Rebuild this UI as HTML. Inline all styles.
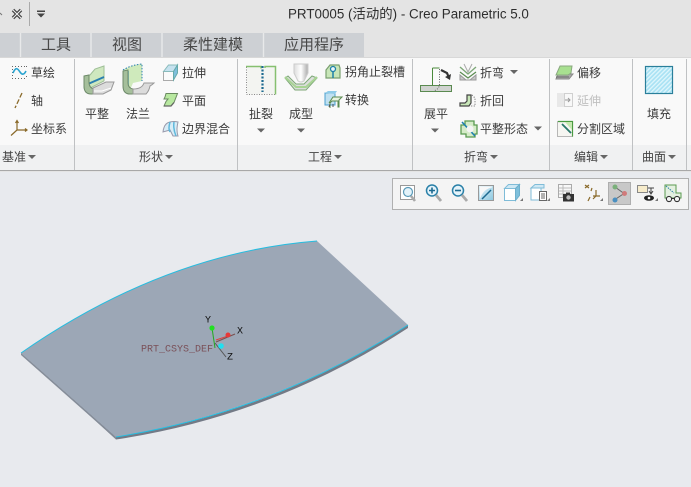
<!DOCTYPE html>
<html lang="zh"><head><meta charset="utf-8"><title>Creo</title>
<style>
html,body{margin:0;padding:0;background:#e8eaee;overflow:hidden}
svg{display:block;position:absolute;left:0;top:0}
text{font-family:"Liberation Sans","Noto Sans CJK SC",sans-serif;font-size:12px;fill:#3a3a3a;dominant-baseline:central}
.t{font-size:15px;fill:#484848;text-anchor:middle}
.g{fill:#444}
.c{font-family:"Liberation Mono",monospace;font-size:9px;fill:#111}
</style></head><body>
<svg width="691" height="487" viewBox="0 0 691 487">
<defs>
<pattern id="h" width="3" height="3" patternUnits="userSpaceOnUse" patternTransform="rotate(45)"><rect width="3" height="3" fill="#a9e2f4"/><rect width="1.3" height="3" fill="#e0f6fc"/></pattern>
<linearGradient id="nz" x1="0" x2="1"><stop offset="0" stop-color="#ddd"/><stop offset=".5" stop-color="#fff"/><stop offset="1" stop-color="#aaa"/></linearGradient>
<linearGradient id="bl" x1="0" y1="0" x2="1" y2="1"><stop offset="0" stop-color="#e4f3fa"/><stop offset="1" stop-color="#8cc8e0"/></linearGradient>
</defs>
<!-- chrome -->
<rect width="691" height="172" fill="#e4e4e4"/>
<rect x="0" y="33" width="364" height="25" fill="#cdd0d4"/>
<g stroke="#e8e9ea" stroke-width="1.4"><path d="M20.5 33v25M91 33v25M162 33v25M263.500 33v25"/></g>
<rect x="0" y="58" width="691" height="87" fill="#f9f9f9"/>
<rect x="0" y="145" width="691" height="25" fill="#f0f1f2"/>
<rect x="0" y="57" width="691" height="1" fill="#d8d8d8"/>
<rect x="0" y="170" width="691" height="1" fill="#a8a8a8"/>
<path d="M74.500 59v111M237.500 59v111M412.500 59v111M549.500 59v111M632.500 59v111M686.500 59v111" stroke="#bfc1c3" fill="none"/>
<!-- quick access -->
<path d="M0 13l2 2" stroke="#777" fill="none"/>
<path d="M13 10l8 8M21 10l-8 8" stroke="#444" stroke-width="3.400" fill="none"/><path d="M13 10l8 8M21 10l-8 8" stroke="#f2f2f2" stroke-width="1" fill="none"/>
<rect x="29" y="2" width="1" height="24" fill="#aaa"/>
<rect x="37" y="10.500" width="8" height="1.500" fill="#444"/><path d="M37 13.500h8l-4 4z" fill="#444"/>
<text x="288" y="14" style="font-size:13.400px;fill:#2e2e2e">PRT0005 (活动的) - Creo Parametric 5.0</text>
<!-- tabs -->
<text class="t" x="56" y="45">工具</text><text class="t" x="127" y="45">视图</text><text class="t" x="213" y="45">柔性建模</text><text class="t" x="314" y="45">应用程序</text>
<!-- labels -->
<text x="31" y="73">草绘</text><text x="31" y="101">轴</text><text x="31" y="129">坐标系</text>
<text x="85" y="114">平整</text><text x="126" y="114">法兰</text>
<text x="182" y="73">拉伸</text><text x="182" y="101">平面</text><text x="182" y="129">边界混合</text>
<text x="249" y="114">扯裂</text><text x="289" y="114">成型</text>
<text x="345" y="72">拐角止裂槽</text><text x="345" y="100">转换</text>
<text x="424" y="114">展平</text><text x="480" y="73">折弯</text><text x="480" y="101">折回</text><text x="480" y="129">平整形态</text>
<text x="577" y="73">偏移</text><text x="577" y="101" style="fill:#c0c0c0">延伸</text><text x="577" y="129">分割区域</text>
<text x="647" y="114">填充</text>
<text class="g" x="2" y="157">基准</text><text class="g" x="139" y="157">形状</text><text class="g" x="308" y="157">工程</text><text class="g" x="464" y="157">折弯</text><text class="g" x="574" y="157">编辑</text><text class="g" x="642" y="157">曲面</text>
<!-- arrows -->
<g fill="#666">
<path d="M28 155h8l-4 4zM165 155h8l-4 4zM334 155h8l-4 4zM490 155h8l-4 4zM600 155h8l-4 4zM668 155h8l-4 4z"/>
<path d="M257 128.500h8l-4 4zM297 128.500h8l-4 4zM431 128.500h8l-4 4zM510 70h8l-4 4zM534 126.500h8l-4 4z"/>
</g>
<!-- 草绘 -->
<path d="M12 66.500h15M12 72.500h2M12 78.500h15M12.500 66v13M26.500 66v2M26.500 76v3" stroke="#666" stroke-dasharray="1 2" fill="none"/>
<path d="M13 73c3-7 5-4 7-1 2 3 4 3 6-1" stroke="#2ba4d0" stroke-width="1.600" fill="none"/>
<!-- 轴 -->
<path d="M22 93l-7 15" stroke="#8a6a2a" stroke-width="1.300" stroke-dasharray="5 2" fill="none"/>
<!-- 坐标系 -->
<path d="M17 121v9h10M17 130l-6 5.500M15.500 123l1.500-2.500 1.500 2.500M25 128.500l2 1.500-2 1.500" stroke="#8a6a2a" stroke-width="1.200" fill="none"/>
<!-- 平整 -->
<path d="M84 76l6-1 5-6 9-3v15l-12 6-3 3-5-2z" fill="#cfe8bf" stroke="#9fbf98"/>
<path d="M88 84l16-7" stroke="#2a7fb0" stroke-width="2" fill="none"/>
<path d="M84 76v10q0 8 7 8h3v-5q-5-1-5-7v-7z" fill="#a5bf9b" stroke="#6e8a6a"/>
<path d="M93 88l13-6h8l-3 8-8 4H93z" fill="#dcdcdc" stroke="#999"/>
<path d="M94 91h8l9-3" stroke="#fff" fill="none"/>
<!-- 法兰 -->
<path d="M123 70q8-5 19-6v17l-9 2-3 7-7-2z" fill="#cfeabc"/>
<path d="M123 70q8-5 19-6v17" stroke="#2a7fb0" stroke-dasharray="1.500 1.500" fill="none"/>
<path d="M127.500 71v15" stroke="#1689c8" stroke-width="2.400" fill="none"/>
<path d="M123 71v15q0 8 7 8h3v-5q-5-1-5-6V70z" fill="#a5bf9b" stroke="#6e8a6a"/>
<path d="M133 89q9 0 11-6h10q-2 2-4 3-1 5-4 8h-13z" fill="#dcdcdc" stroke="#999"/>
<!-- 拉伸 -->
<path d="M163.500 71.500h10v9h-10z" fill="#fafafa" stroke="#aaa"/>
<path d="M163.500 71.500l5-6.500h9l-4 6.500z" fill="#c6e2ef" stroke="#8bb"/>
<path d="M173.500 71.500l4-6.500v8l-4 7z" fill="#7fbfdc" stroke="#6aa"/>
<!-- 平面 -->
<path d="M166 93.500h11.500l-3.500 9-3 3.500h-7l2-4.500 2-2.500h-4l1-2z" fill="#b8e8a0" stroke="#6a8a60"/>
<path d="M164 106h7l3-3.500" stroke="#666" stroke-width="1.300" fill="none"/>
<!-- 边界混合 -->
<path d="M163 132q1-9 7-10 4-1 8 0-2 8 0 14l-5 0-3-6z" fill="#d8ecf6" stroke="#99a"/>
<path d="M170 122q-2 7 0 10M174 122q-1 7 2 14" stroke="#5fb8dc" stroke-width="1.500" fill="none"/>
<!-- 扯裂 -->
<rect x="247" y="67" width="29" height="27.500" fill="#f3f4f1"/>
<path d="M246.500 67v27.500h29" stroke="#888" stroke-dasharray="1 1.500" fill="none"/>
<path d="M246 66.500h15v2M265 68v-1.500h10.500v28" stroke="#86c070" stroke-width="1.500" fill="none"/>
<path d="M262.500 66v26" stroke="#1d6a90" stroke-width="2.200" stroke-dasharray="2 1.500" fill="none"/>
<!-- 成型 -->
<path d="M294 64h14v9l-4 8q-3 2-6 0l-4-8z" fill="url(#nz)" stroke="#ccc"/>
<path d="M285 78l3-2 8 8h8l8-8 5 2-11 12h-11z" fill="#dcdedc" stroke="#7ea878"/>
<path d="M285 77l11 10h10l11-10" stroke="#a8d494" stroke-width="2" fill="none"/>
<!-- 拐角止裂槽 -->
<path d="M326 78v-8l4-5h9l1 3v10z" fill="#c8e6b8" stroke="#7aa070" stroke-width="1.200"/>
<circle cx="333" cy="69" r="2.500" fill="#eaf6fb" stroke="#1e80a8" stroke-width="1.300"/><path d="M333 71v7" stroke="#1e80a8" stroke-width="1.500"/>
<!-- 转换 -->
<path d="M325 93h10v12h-10z" fill="#c0e0f0" stroke="#4aa0d0"/><path d="M325 93l3-2h9l-2 3z" fill="#8fcbe8"/>
<path d="M329 103l4-6h9l-3 3v7h-1v-6h-6l-2 2v5" fill="#e8f3e0" stroke="#5a8a50"/><path d="M330 104l-1 3M333 104v3" stroke="#555" fill="none"/>
<!-- 展平 -->
<rect x="420.500" y="85.500" width="31" height="6" fill="#d0d3d0" stroke="#5a8a50"/>
<path d="M432.500 68v17.500M432.500 68h7" stroke="#4a8a3c" fill="none"/>
<rect x="433" y="69" width="6" height="16" fill="#fafafa"/>
<path d="M439.500 69v15q0 5-6 7" stroke="#666" stroke-dasharray="1 1.500" fill="none"/>
<path d="M441 70l6 3 2 5" stroke="#333" stroke-width="2.200" fill="none"/><path d="M451 74l-1 6-5-3z" fill="#333"/>
<!-- 折弯 -->
<path d="M460 67l8 7 8-7" stroke="#7ea878" stroke-width="1.400" fill="none"/>
<path d="M464 64l4 8 4-8" stroke="#aaa" fill="none"/>
<path d="M460 72l8 6 8-6" stroke="#5a8a50" stroke-width="1.200" fill="none"/>
<path d="M460 75l6 5h4l6-5v5h-16z" fill="#c8c8c8" stroke="#999"/>
<!-- 折回 -->
<path d="M460 106v-3h5l2-2v-6h4v8l-2 3z" fill="#c8e6b8" stroke="#444" stroke-width="1.200"/>
<path d="M472 95l3 3v8h-4" stroke="#666" stroke-dasharray="1 1.500" fill="none"/>
<!-- 平整形态 -->
<path d="M461 125h4v-4h9v4h3v9h-2v3h-9v-3h-5z" fill="#d5ecc8" stroke="#5a9a50" stroke-width="1.300"/>
<path d="M462 122l13 14" stroke="#1e80b0" stroke-width="1.600" fill="none"/><circle cx="470" cy="129" r="3.500" fill="#f4f4f4"/>
<!-- 偏移 -->
<path d="M558 74l-2 5h13l4-5z" fill="#aaa" stroke="#888"/>
<path d="M560 66h12l-1 7-3 2h-12z" fill="#a8e090" stroke="#8aa880"/>
<path d="M556 77h13" stroke="#666" fill="none"/>
<!-- 延伸 -->
<rect x="557" y="93" width="7" height="14" fill="#e8e8e8"/><rect x="564.500" y="93.500" width="8" height="13" fill="#f8f8f8" stroke="#d0d0d0"/>
<path d="M565 100h5M568 98l2 2-2 2" stroke="#999" fill="none"/>
<!-- 分割区域 -->
<rect x="557.500" y="121.500" width="15" height="15" fill="#f6f6f2" stroke="#777" stroke-dasharray="1 1"/>
<path d="M558 121.500h14.500v15" stroke="#4a9a40" stroke-width="1.200" fill="none"/>
<path d="M565 122h7v8z" fill="#c5e8b0"/><path d="M562 124l9 9" stroke="#28786a" stroke-width="1.800" fill="none"/>
<!-- 填充 -->
<rect x="645.500" y="66.500" width="27" height="27" fill="url(#h)" stroke="#2a7f9a" stroke-width="1.200"/>
<!-- view toolbar -->
<rect x="392.500" y="178.500" width="296" height="31" fill="#f4f4f4" stroke="#b0b0b0"/>
<rect x="608.500" y="182.500" width="22" height="22" fill="#c8c8c8" stroke="#aeaeae"/>
<!-- refit -->
<rect x="400.500" y="185.500" width="14" height="14" fill="#fff" stroke="#999"/>
<circle cx="408" cy="192" r="4.500" fill="#e4f3fa" stroke="#5a9ab8" stroke-width="1.200"/><path d="M411 196l4 5" stroke="#aaa" stroke-width="2.600"/>
<!-- zoom in -->
<circle cx="432" cy="190.500" r="5.500" fill="#e4f3fa" stroke="#2a80a8" stroke-width="1.500"/><path d="M429 190.500h6M432 187.500v6" stroke="#1d6a90" stroke-width="1.600"/><path d="M436 195l5 6" stroke="#aaa" stroke-width="2.800"/>
<!-- zoom out -->
<circle cx="458" cy="190.500" r="5.500" fill="#e4f3fa" stroke="#2a80a8" stroke-width="1.500"/><path d="M455 190.500h6" stroke="#1d6a90" stroke-width="1.600"/><path d="M462 195l5 6" stroke="#aaa" stroke-width="2.800"/>
<!-- repaint -->
<rect x="478.500" y="185.500" width="15" height="15" fill="url(#bl)" stroke="#999"/>
<path d="M480 186.500h12v1q-8 1-12 11z" fill="#f8f8f8"/><path d="M482 199l9-9" stroke="#1d6a90" stroke-width="1.500"/>
<!-- named view -->
<path d="M504.500 188.500h11v12h-11z" fill="#fff" stroke="#7fbcd8"/><path d="M504.500 188.500l4-4h11l-4 4z" fill="#cfe8f4" stroke="#7fbcd8"/><path d="M515.500 188.500l4-4v11l-4 5z" fill="#7fc0dc" stroke="#6fb0cc"/>
<path d="M520 201h3v-3z" fill="#777"/>
<!-- saved orient -->
<path d="M531 188h10v12h-10z" fill="#fff" stroke="#7fbcd8"/><path d="M531 188l4-3.500h9v3.500z" fill="#cfe8f4" stroke="#7fbcd8"/>
<rect x="539.500" y="191.500" width="7" height="9" fill="#fff" stroke="#666"/><path d="M541 194h4M541 196h4M541 198h4" stroke="#666"/>
<path d="M547 201h3v-3z" fill="#777"/>
<!-- camera/table -->
<rect x="558.500" y="184.500" width="13" height="13" fill="#f8f8f8" stroke="#aaa"/><path d="M559 188h12M559 191h12M559 194h12M563 185v12" stroke="#bbb"/>
<rect x="563" y="194" width="11" height="7.500" fill="#333"/><rect x="566" y="192.500" width="4" height="2" fill="#333"/><circle cx="568.500" cy="197.500" r="2.200" fill="#bbb"/>
<!-- datum planes -->
<path d="M585 185l4 3M589 185l-4 3M592 188l-1 3M590 197l-2 4M596 190v6M593 196h7M596 196l-3 3" stroke="#8a6a2a" stroke-width="1.200" fill="none"/>
<path d="M600 201h3v-3z" fill="#777"/>
<!-- spin/nodes -->
<path d="M615 187l9 6.500-9 6" stroke="#666" fill="none"/>
<circle cx="615" cy="187" r="2.500" fill="#7ab07a"/><circle cx="624.500" cy="193.500" r="2.500" fill="#d07a7a"/><circle cx="615" cy="200" r="2.500" fill="#4a8fc0"/>
<!-- display style -->
<rect x="637.500" y="185.500" width="10" height="7" fill="#f7eccb" stroke="#888"/>
<path d="M648 188h6M651 188v5M649 191l2 3 2-3" stroke="#444" fill="none"/>
<ellipse cx="649" cy="198" rx="5" ry="2.800" fill="#222"/><circle cx="649" cy="198" r="1.300" fill="#fff"/>
<path d="M655 201h3v-3z" fill="#777"/>
<!-- glasses -->
<path d="M665 185h11v8h5v5h-16z" fill="#e4f0e0" stroke="#5a9a50"/><path d="M666 186l8 7" stroke="#2a80a8" stroke-dasharray="1.500 1" fill="none"/>
<circle cx="669" cy="199" r="2.600" fill="#f4f4f4" stroke="#333" stroke-width="1.100"/><circle cx="677" cy="199" r="2.600" fill="#f4f4f4" stroke="#333" stroke-width="1.100"/><path d="M671.500 198.500h3" stroke="#333"/>
<!-- model -->
<path d="M21 353L116 437Q273 413 408 325V328Q273 416 116 439.500z" fill="#737a86"/>
<path d="M21 353L116 437Q273 411 408 325L317 241Q165 253 21 353z" fill="#9ca7b6"/>
<path d="M21 353v2L116 439v-2z" fill="#858d99"/>
<path d="M21 353Q165 253 317 241" stroke="#25bde0" stroke-width="1" fill="none"/>
<path d="M116 437Q273 412 408 325" stroke="#25bde0" stroke-width="1" fill="none"/>
<!-- csys -->
<path d="M212 328l3 20" stroke="#22aa22" fill="none"/>
<path d="M216 340l12-4" stroke="#e04040" fill="none"/>
<path d="M216 342l19-8" stroke="#7a5050" stroke-width="1.100" fill="none"/>
<path d="M215 343l11 14" stroke="#555" fill="none"/>
<circle cx="212" cy="328" r="2.600" fill="#22e022"/><circle cx="228" cy="335" r="2.500" fill="#e83838"/><circle cx="221" cy="346" r="2.800" fill="#20e0f0"/>
<text class="c" x="205" y="321" style="font-size:10px">Y</text><text class="c" x="237" y="332" style="font-size:10px">X</text><text class="c" x="227" y="358" style="font-size:10px">Z</text>
<text class="c" x="141" y="350" style="font-size:10px;fill:#7a5058">PRT_CSYS_DEF</text>
</svg>
</body></html>
